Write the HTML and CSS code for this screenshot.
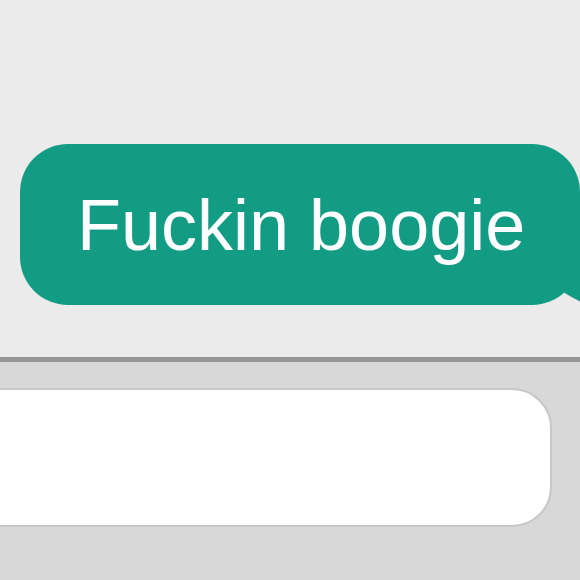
FILE: index.html
```html
<!DOCTYPE html>
<html>
<head>
<meta charset="utf-8">
<link rel="stylesheet" href="styles.css">
</head>
<body>
<div class="screen">
  <div class="messages">
    <div class="bubble">
      <span class="text">Fuckin boogie</span>
      <svg class="tail" width="60" height="60" viewBox="0 0 60 60"><path d="M0 0 H60 V60 H50 Q22 50 3 38 Z" fill="#139c84"/></svg>
    </div>
  </div>
  <div class="composer">
    <div class="input"></div>
  </div>
</div>
</body>
</html>
```
FILE: styles.css
```css
html, body {
  margin: 0;
  padding: 0;
}
body {
  width: 580px;
  height: 580px;
  overflow: hidden;
  background: #d8d8d8;
  font-family: "Liberation Sans", Arial, sans-serif;
}
.screen {
  width: 580px;
  height: 580px;
  display: flex;
  flex-direction: column;
  overflow: hidden;
}
.messages {
  height: 357px;
  background: #ebebeb;
  padding: 144px 0 0 20px;
  box-sizing: border-box;
  flex: none;
}
.bubble {
  position: relative;
  width: 560px;
  height: 161px;
  box-sizing: border-box;
  background: #139c84;
  border-radius: 48px;
  display: flex;
  align-items: center;
  padding-left: 57px;
}
.text {
  color: #ffffff;
  font-size: 72px;
  line-height: 1;
  white-space: nowrap;
}
.tail {
  position: absolute;
  left: 540px;
  top: 110px;
  display: block;
}
.composer {
  flex: 1;
  border-top: 5px solid #979797;
  background: #d8d8d8;
  padding-top: 26px;
}
.input {
  margin-left: -40px;
  width: 592px;
  height: 139px;
  box-sizing: border-box;
  background: #ffffff;
  border: 2px solid #c7c7cb;
  border-radius: 40px;
}
```
